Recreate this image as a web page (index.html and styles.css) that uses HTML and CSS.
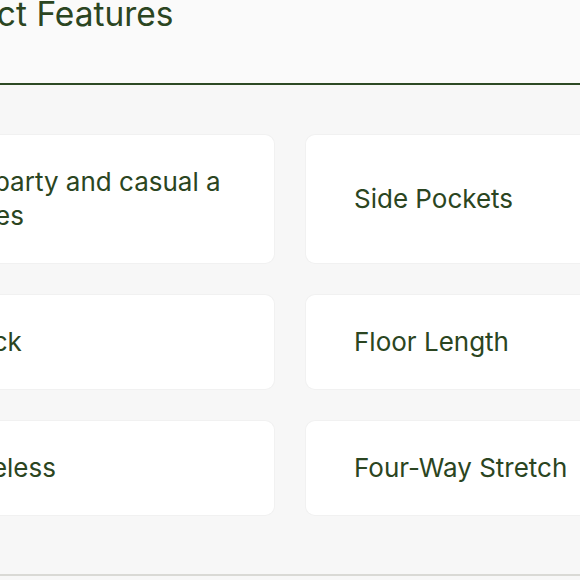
FILE: index.html
```html
<!DOCTYPE html>
<html lang="en">
<head>
<meta charset="utf-8">
<title>Product Features</title>
<link rel="stylesheet" href="styles.css">
</head>
<body>
<section class="features">
  <header class="features-head">
    <h2 class="features-title">Product Features</h2>
  </header>
  <div class="features-grid">
    <div class="feature-card"><span>For a party and casual appetites</span></div>
    <div class="feature-card"><span>Side Pockets</span></div>
    <div class="feature-card"><span>Hi Neck</span></div>
    <div class="feature-card"><span>Floor Length</span></div>
    <div class="feature-card"><span>Sleeveless</span></div>
    <div class="feature-card"><span>Four-Way Stretch</span></div>
  </div>
</section>
</body>
</html>
```
FILE: styles.css
```css
html, body {
  margin: 0;
  padding: 0;
  background: #f7f7f7;
  overflow: hidden;
}
body {
  font-family: Inter, "Noto Sans", sans-serif;
  color: #2b4521;
}
.features {
  width: 826px;
  margin-left: -123px;
  padding-bottom: 59px;
  border-bottom: 2px solid #d9d9d5;
}
.features-head {
  background: #fafafa;
  border-bottom: 2px solid #2d4a24;
  height: 93px;
  margin-top: -8px;
  box-sizing: border-box;
  padding-top: 8px;
  padding-left: 26px;
}
.features-title {
  margin: -6px 0 0;
  font-size: 33.5px;
  font-weight: 400;
  line-height: 1.2;
}
.features-grid {
  margin-top: 50px;
  display: grid;
  grid-template-columns: 397px 397px;
  gap: 32px;
}
.feature-card {
  background: #ffffff;
  border-radius: 9px;
  box-shadow: 0 0 0 1px #f1f1f1;
  padding: 30px 40px 30px 48px;
  display: flex;
  align-items: center;
  font-size: 26px;
  line-height: 34px;
  word-break: break-all;
}
```
